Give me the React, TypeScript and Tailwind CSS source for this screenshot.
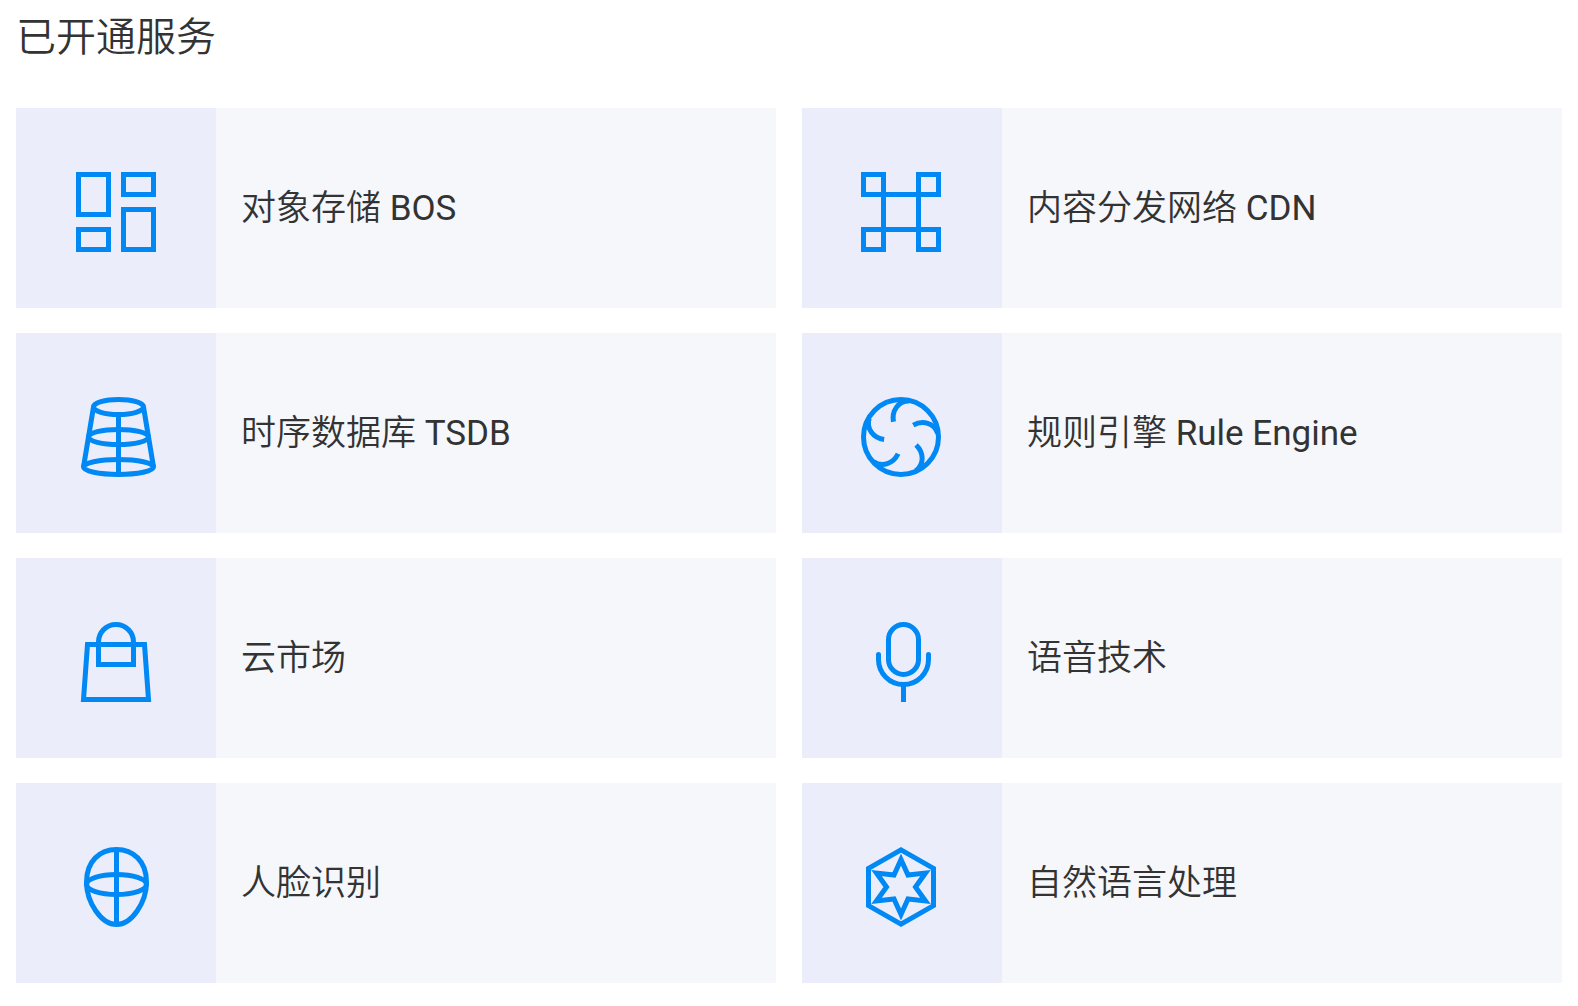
import React from 'react';

interface Service {
  name: string;
  abbr?: string;
  icon: React.ReactNode;
}

const services: Service[] = [
  {
    name: '对象存储',
    abbr: 'BOS',
    icon: (
      <>
        <rect x="2.5" y="2.5" width="30" height="40" />
        <rect x="47.5" y="2.5" width="30" height="20" />
        <rect x="2.5" y="57.5" width="30" height="20" />
        <rect x="47.5" y="37.5" width="30" height="40" />
      </>
    ),
  },
  {
    name: '内容分发网络',
    abbr: 'CDN',
    icon: (
      <>
        <rect x="1.5" y="2.5" width="20" height="20" />
        <rect x="56.5" y="2.5" width="20" height="20" />
        <rect x="1.5" y="57.5" width="20" height="20" />
        <rect x="56.5" y="57.5" width="20" height="20" />
        <rect x="21.5" y="22.5" width="35" height="35" />
      </>
    ),
  },
  {
    name: '时序数据库',
    abbr: 'TSDB',
    icon: (
      <>
        <ellipse cx="42.5" cy="10" rx="25" ry="7.5" />
        <ellipse cx="42.5" cy="40" rx="30" ry="7.5" />
        <ellipse cx="42.5" cy="70" rx="35" ry="7.5" />
        <path d="M17.5 10 L7.5 70 M67.5 10 L77.5 70 M42.5 17.5 V77.5" />
      </>
    ),
  },
  {
    name: '规则引擎',
    abbr: 'Rule Engine',
    icon: (
      <>
        <circle cx="39" cy="40" r="37.5" />
        {[0, 72, 144, 216, 288].map((angle) => (
          <path
            key={angle}
            d="M31.5 24.7 C29.5 14 36 4 47 4"
            transform={`rotate(${angle} 39 40)`}
          />
        ))}
      </>
    ),
  },
  {
    name: '云市场',
    icon: (
      <>
        <path d="M11.5 22.5 H68.5 L72.5 77.5 H7.5 Z" />
        <path d="M22.5 20 V42.5 H57.5 V20 A17.5 17.5 0 0 0 22.5 20 V23" />
      </>
    ),
  },
  {
    name: '语音技术',
    icon: (
      <>
        <rect x="26.5" y="2.5" width="30" height="50" rx="15" />
        <path d="M16.5 32.5 V37.5 A25 25 0 0 0 66.5 37.5 V32.5" strokeLinecap="round" />
        <path d="M41.5 62.5 V80" />
      </>
    ),
  },
  {
    name: '人脸识别',
    icon: (
      <>
        <path d="M10.5 35 C10.5 14 24 2.5 40.5 2.5 S70.5 14 70.5 35 C70.5 55 56 77.5 40.5 77.5 S10.5 55 10.5 35 Z" />
        <ellipse cx="40.5" cy="37.5" rx="30" ry="10" />
        <path d="M40.5 2.5 V77.5" />
      </>
    ),
  },
  {
    name: '自然语言处理',
    icon: (
      <>
        <path d="M39 2.9 L71.5 21.4 V58.6 L39 77.1 L6.5 58.6 V21.4 Z" />
        <path d="M39 12.5 L46 28 L63.5 26 L53.5 40 L63.5 54 L46 52 L39 67.5 L32 52 L14.5 54 L24.5 40 L14.5 26 L32 28 Z" />
      </>
    ),
  },
];

function ServiceCard({ name, abbr, icon }: Service) {
  return (
    <li className="flex bg-[#f6f7fb]">
      <div className="flex w-[200px] shrink-0 justify-center bg-[#ebeefa] pt-[60px] pb-[52px]">
        <svg
          viewBox="-4 -4 88 88"
          className="size-[88px]"
          fill="none"
          stroke="#0088f4"
          strokeWidth="5"
          strokeMiterlimit="10"
          aria-hidden="true"
        >
          {icon}
        </svg>
      </div>
      <div className="flex min-w-0 items-center px-[25px] pt-[2px] text-[35px] leading-[48px]">
        <p>
          {name}
          {abbr && <span className="font-normal"> {abbr}</span>}
        </p>
      </div>
    </li>
  );
}

export default function App() {
  return (
    <main className="min-h-screen bg-white px-4 pt-[10px] pb-6 font-['Roboto','Noto_Sans_CJK_SC',sans-serif] font-[350] text-[#333333]">
      <h1 className="mb-[42px] text-[40px] leading-[56px] font-[350]">已开通服务</h1>
      <ul className="grid grid-cols-2 gap-x-[26px] gap-y-[25px]">
        {services.map((service) => (
          <ServiceCard key={service.name} {...service} />
        ))}
      </ul>
    </main>
  );
}
